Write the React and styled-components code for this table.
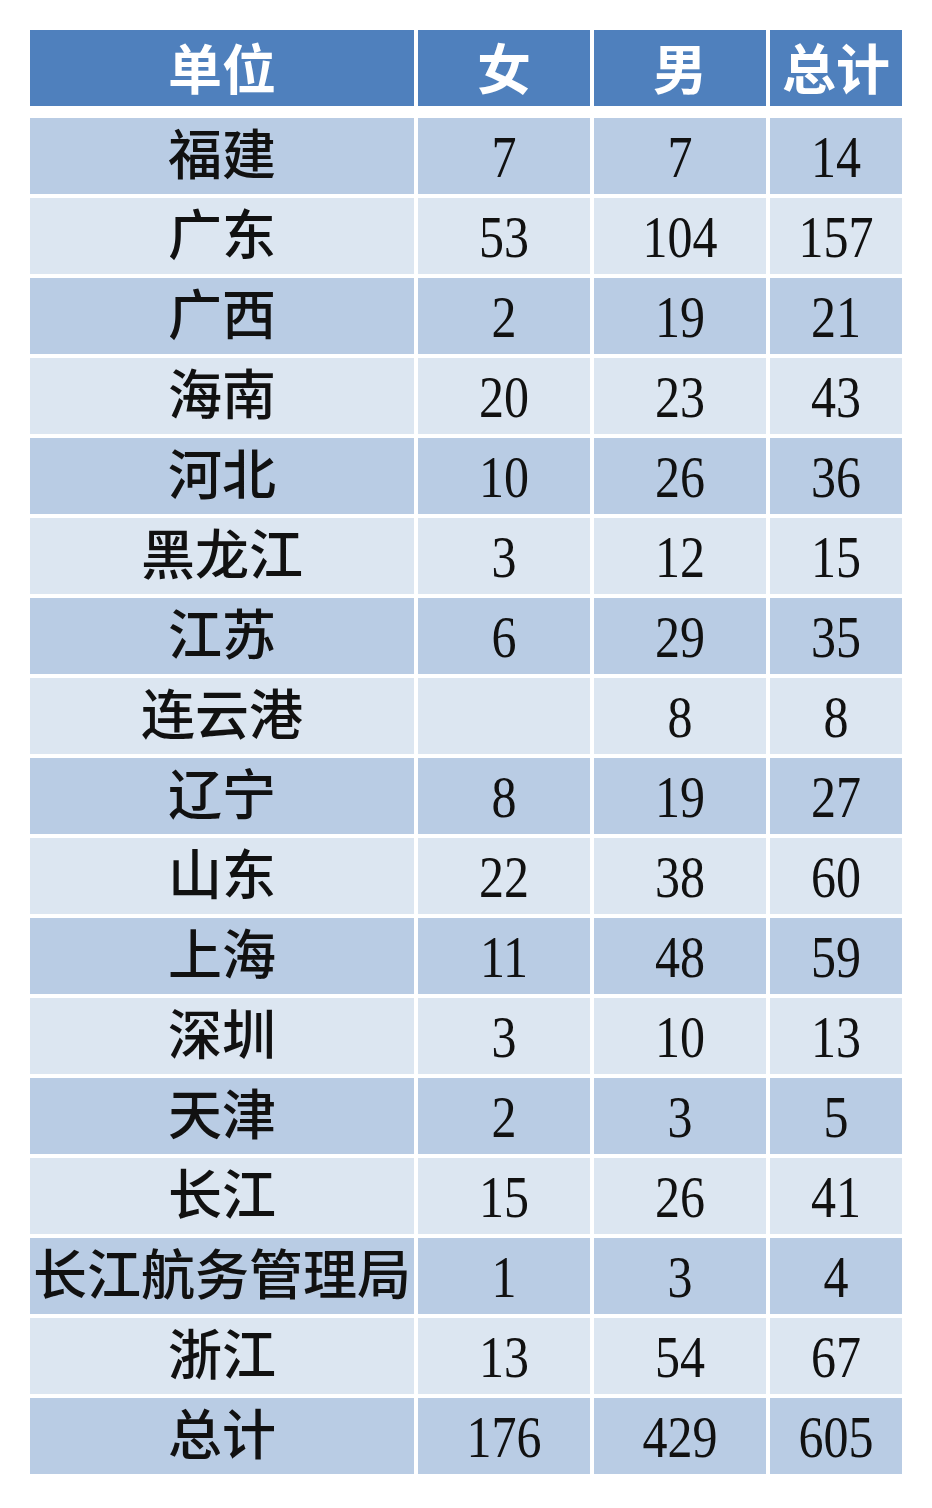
import styled, { createGlobalStyle } from "styled-components";

const GlobalStyle = createGlobalStyle`
  html, body {
    margin: 0;
    padding: 0;
    background: #ffffff;
  }
`;

const rows = [
  ["福建", "7", "7", "14"],
  ["广东", "53", "104", "157"],
  ["广西", "2", "19", "21"],
  ["海南", "20", "23", "43"],
  ["河北", "10", "26", "36"],
  ["黑龙江", "3", "12", "15"],
  ["江苏", "6", "29", "35"],
  ["连云港", "", "8", "8"],
  ["辽宁", "8", "19", "27"],
  ["山东", "22", "38", "60"],
  ["上海", "11", "48", "59"],
  ["深圳", "3", "10", "13"],
  ["天津", "2", "3", "5"],
  ["长江", "15", "26", "41"],
  ["长江航务管理局", "1", "3", "4"],
  ["浙江", "13", "54", "67"],
  ["总计", "176", "429", "605"],
];

const Page = styled.div`
  width: 932px;
  min-height: 1508px;
  padding: 30px 0 0 30px;
  box-sizing: border-box;
  background: #ffffff;
`;

const Table = styled.div`
  display: grid;
  grid-template-columns: 384px 172px 172px 132px;
  column-gap: 4px;
  row-gap: 4px;
`;

const Header = styled.div`
  grid-column: 1 / -1;
  display: grid;
  grid-template-columns: subgrid;
  margin-bottom: 8px;
`;

const HeadCell = styled.div`
  height: 76px;
  box-sizing: border-box;
  padding-top: 8px;
  background: #4f80bd;
  color: #ffffff;
  display: flex;
  align-items: center;
  justify-content: center;
  font-family: "Liberation Serif", "Noto Sans CJK SC", serif;
  font-weight: 700;
  font-size: 54px;
  line-height: 1;
  overflow: hidden;
`;

const Cell = styled.div`
  height: 76px;
  box-sizing: border-box;
  padding-top: 2px;
  background: ${(p) => (p.$dark ? "#b9cce4" : "#dce6f1")};
  color: #111111;
  display: flex;
  align-items: center;
  justify-content: center;
  font-family: "Liberation Serif", "Noto Sans CJK SC", serif;
  font-size: ${(p) => (p.$num ? "50px" : "54px")};
  font-weight: 500;
  line-height: 1;
  white-space: nowrap;
  overflow: hidden;
`;

const Num = styled.span`
  display: inline-block;
  transform: scaleY(1.18);
`;

export default function App() {
  return (
    <>
      <GlobalStyle />
      <Page>
        <Table>
          <Header>
            <HeadCell>单位</HeadCell>
            <HeadCell>女</HeadCell>
            <HeadCell>男</HeadCell>
            <HeadCell>总计</HeadCell>
          </Header>
          {rows.map((r, i) =>
            r.map((v, j) => (
              <Cell key={`${i}-${j}`} $dark={i % 2 === 0} $num={j > 0}>
                {j > 0 ? <Num>{v}</Num> : v}
              </Cell>
            ))
          )}
        </Table>
      </Page>
    </>
  );
}
